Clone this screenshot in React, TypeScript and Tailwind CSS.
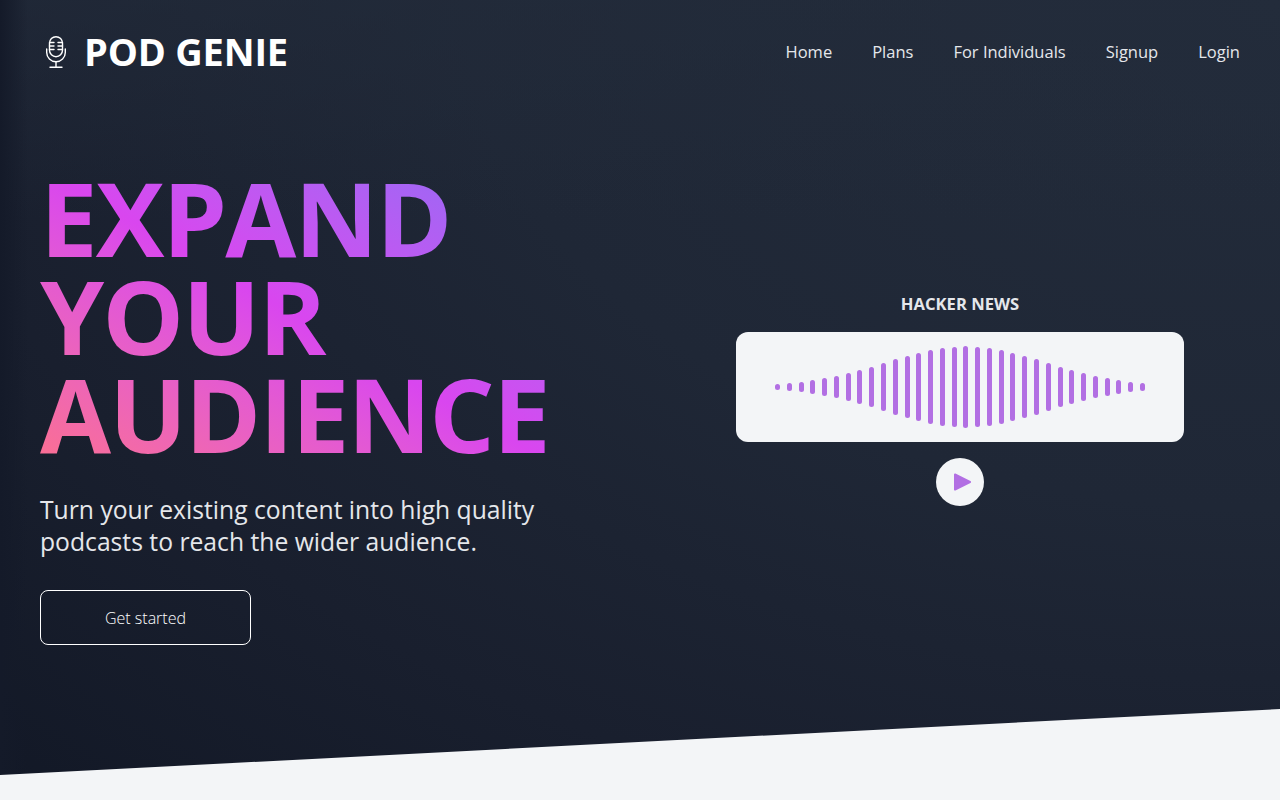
const bars = [6, 8, 10, 14, 18, 22, 28, 34, 40, 48, 56, 62, 68, 74, 78, 80, 82, 80, 78, 74, 68, 62, 56, 48, 40, 34, 28, 22, 18, 14, 10, 8];
const links = ["Home", "Plans", "For Individuals", "Signup", "Login"];

function MicIcon() {
  return (
    <svg width="24" height="32" viewBox="0 0 24 32" fill="none" stroke="white" strokeWidth="1.4" strokeLinecap="round">
      <rect x="5.5" y="0.7" width="13" height="20" rx="6.5" />
      <path d="M5.5 6.5h4.5M5.5 10h4.5M5.5 13.5h4.5M14 6.5h4.5M14 10h4.5M14 13.5h4.5" />
      <path d="M2.7 13v3.5a9.3 9.3 0 0 0 18.6 0V13" />
      <path d="M12 26v5M6 31.2h12" />
    </svg>
  );
}

export default function App() {
  return (
    <div className="relative h-[800px] overflow-hidden bg-[linear-gradient(to_bottom,rgba(35,44,59,0.6)_0px,rgba(35,44,59,0)_220px),radial-gradient(ellipse_at_top_right,#232c3b_0%,#1f2736_45%,#191f2e_75%,#121826_100%)] font-['Open_Sans','Noto_Sans',sans-serif] text-white">
      <div className="absolute left-0 top-0 h-full w-[28px] bg-gradient-to-r from-[#141a29] to-transparent" />
      <div className="absolute inset-x-0 bottom-0 h-[91px] bg-[#f3f5f7] [clip-path:polygon(0_66px,100%_0,100%_100%,0_100%)]" />
      <div className="relative">
        <header className="flex h-[104px] items-center justify-between px-10">
          <div className="flex items-center gap-[16px] pl-1">
            <MicIcon />
            <span className="pb-[2px] text-[38px] font-bold leading-none tracking-[-0.2px]">POD GENIE</span>
          </div>
          <nav className="flex gap-10 text-[16.5px] text-[#e5e7eb]">
            {links.map((l) => (
              <a key={l}>{l}</a>
            ))}
          </nav>
        </header>
        <main className="grid grid-cols-2">
          <div className="pl-10 pt-[64px]">
            <h1 className="w-fit bg-gradient-to-tr from-[#fb6f92] via-[#d946ef] to-[#8b6cf6] bg-clip-text text-[103px] font-bold leading-[98px] tracking-[-1.9px] text-transparent">
              EXPAND
              <br />
              YOUR
              <br />
              AUDIENCE
            </h1>
            <p className="mt-[32px] text-[24.7px] leading-[32px] text-[#e5e7eb]">
              Turn your existing content into high quality
              <br />
              podcasts to reach the wider audience.
            </p>
            <button className="mt-8 h-[55px] w-[211px] rounded-lg border border-white text-base font-light">Get started</button>
          </div>
          <div className="flex flex-col items-center pt-[188px]">
            <h2 className="text-[16.6px] font-bold leading-6 text-[#e5e7eb]">HACKER NEWS</h2>
            <div className="mt-4 flex h-[110px] w-[448px] items-center justify-center gap-[6.77px] rounded-xl bg-[#f3f5f7]">
              {bars.map((h, i) => (
                <span key={i} className="w-[5px] rounded-full bg-[#b26fe3]" style={{ height: h }} />
              ))}
            </div>
            <button className="mt-4 flex h-12 w-12 items-center justify-center rounded-full bg-[#f3f5f7]">
              <svg width="18" height="18" viewBox="0 0 18 18" className="ml-1">
                <path d="M2 1.5 L17 9 L2 16.5 Z" fill="#b26fe3" stroke="#b26fe3" strokeWidth="2" strokeLinejoin="round" />
              </svg>
            </button>
          </div>
        </main>
      </div>
    </div>
  );
}
